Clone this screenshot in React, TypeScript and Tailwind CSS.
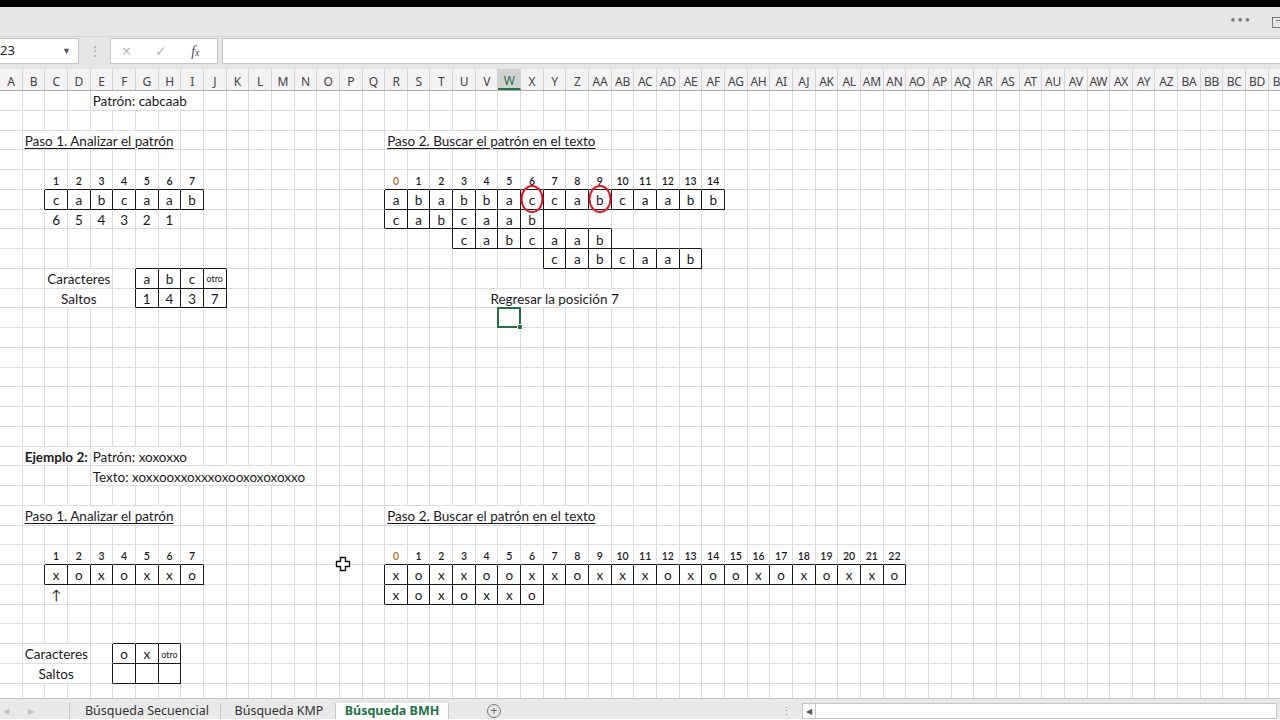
import clsx from "clsx";

const COLS = 57;
const ROWS = 31;

type Kind = "text" | "idx" | "tiny" | "title" | "bold";
type Cell = {
  t: string;
  kind?: Kind;
  align?: "left" | "center";
  box?: boolean;
  wide?: boolean;
  circle?: boolean;
  color?: string;
};

function colName(i: number) {
  let s = "";
  let n = i + 1;
  while (n > 0) {
    const m = (n - 1) % 26;
    s = String.fromCharCode(65 + m) + s;
    n = Math.floor((n - 1) / 26);
  }
  return s;
}

const cells = new Map<string, Cell>();
const key = (r: number, c: number) => `${r}-${c}`;
const put = (r: number, c: number, cell: Cell) => cells.set(key(r, c), cell);
const putRow = (r: number, c0: number, items: string[], extra: Partial<Cell> = {}) =>
  items.forEach((t, i) => put(r, c0 + i, { t, align: "center", ...extra, kind: t === "otro" ? "tiny" : extra.kind }));
const nums = (from: number, to: number) => Array.from({ length: to - from + 1 }, (_, i) => String(from + i));

// ejemplo 1
put(1, 4, { t: "Patrón: cabcaab", align: "left", wide: true });
put(3, 1, { t: "Paso 1. Analizar el patrón", kind: "title", align: "left", wide: true });
put(3, 17, { t: "Paso 2. Buscar el patrón en el texto", kind: "title", align: "left", wide: true });
putRow(5, 2, nums(1, 7), { kind: "idx" });
putRow(5, 17, nums(0, 14), { kind: "idx" });
put(5, 17, { t: "0", kind: "idx", align: "center", color: "text-[#c0641c]" });
putRow(6, 2, "cabcaab".split(""), { box: true });
putRow(6, 17, "ababbaccabcaabb".split(""), { box: true });
put(6, 23, { t: "c", align: "center", box: true, circle: true });
put(6, 26, { t: "b", align: "center", box: true, circle: true });
putRow(7, 2, "654321".split(""));
putRow(7, 17, "cabcaab".split(""), { box: true });
putRow(8, 20, "cabcaab".split(""), { box: true });
putRow(9, 24, "cabcaab".split(""), { box: true });
put(10, 3, { t: "Caracteres", align: "center", wide: true });
putRow(10, 6, ["a", "b", "c", "otro"], { box: true });
put(11, 3, { t: "Saltos", align: "center", wide: true });
putRow(11, 6, ["1", "4", "3", "7"], { box: true });
put(11, 24, { t: "Regresar la posición 7", align: "center", wide: true });

// ejemplo 2
put(19, 1, { t: "Ejemplo 2:", kind: "bold", align: "left", wide: true });
put(19, 4, { t: "Patrón: xoxoxxo", align: "left", wide: true });
put(20, 4, { t: "Texto: xoxxooxxoxxxoxooxoxoxoxxo", align: "left", wide: true });
put(22, 1, { t: "Paso 1. Analizar el patrón", kind: "title", align: "left", wide: true });
put(22, 17, { t: "Paso 2. Buscar el patrón en el texto", kind: "title", align: "left", wide: true });
putRow(24, 2, nums(1, 7), { kind: "idx" });
putRow(24, 17, nums(0, 22), { kind: "idx" });
put(24, 17, { t: "0", kind: "idx", align: "center", color: "text-[#c0641c]" });
putRow(25, 2, "xoxoxxo".split(""), { box: true });
putRow(25, 17, "xoxxooxxoxxxoxooxoxoxxo".split(""), { box: true });
put(26, 2, { t: "↑", align: "center" });
putRow(26, 17, "xoxoxxo".split(""), { box: true });
put(29, 1, { t: "Caracteres", align: "left", wide: true });
putRow(29, 5, ["o", "x", "otro"], { box: true });
put(30, 2, { t: "Saltos", align: "center", wide: true });
putRow(30, 5, ["", "", ""], { box: true });

const SEL = { r: 12, c: 22 };

function SheetCell({ r, c }: { r: number; c: number }) {
  const cell = cells.get(key(r, c));
  const boxed = (rr: number, cc: number) => !!cells.get(key(rr, cc))?.box;
  const darkR = boxed(r, c) || boxed(r, c + 1);
  const darkB = boxed(r, c) || boxed(r + 1, c);
  const selected = r === SEL.r && c === SEL.c;

  return (
    <div
      className={clsx(
        "relative flex h-full w-[22.67px] shrink-0 items-center border-r border-b",
        darkR ? "border-r-[#1a1a1a]" : "border-r-[#dadcdd]",
        darkB ? "border-b-[#1a1a1a]" : "border-b-[#dadcdd]",
        cell?.align === "left" ? "justify-start" : "justify-center"
      )}
    >
      {cell && cell.t && (
        <span
          className={clsx(
            "whitespace-nowrap",
            cell.color ?? "text-[#1b1b1b]",
            cell.wide ? "relative z-10 flex h-full items-center bg-white px-[2px] pt-[2px]" : "mt-[2px]",
            cell.kind === "idx" && "mt-[4px] text-[10.5px] font-semibold",
            cell.kind === "tiny" && "text-[9px]",
            cell.kind === "title" && "text-[13.5px] underline decoration-1 underline-offset-2",
            cell.kind === "bold" && "text-[13.5px] font-bold",
            (!cell.kind || cell.kind === "text") && "text-[13.5px]"
          )}
        >
          {cell.t}
        </span>
      )}
      {cell?.circle && (
        <span className="pointer-events-none absolute left-1/2 top-1/2 z-20 h-[28px] w-[23px] -translate-x-1/2 -translate-y-1/2 rounded-[50%] border-[2.5px] border-[#dd1a21]" />
      )}
      {selected && (
        <span className="pointer-events-none absolute -top-px -left-px -right-px -bottom-px z-20 border-2 border-[#217346]">
          <span className="absolute -right-[4px] -bottom-[4px] h-[6px] w-[6px] border border-white bg-[#217346]" />
        </span>
      )}
    </div>
  );
}

function MoveCursor() {
  return (
    <svg className="pointer-events-none absolute left-[335px] top-[556px] z-30" width="16" height="16" viewBox="0 0 16 16">
      <path
        d="M5.5 1.5h5v4h4v5h-4v4h-5v-4h-4v-5h4z"
        fill="#fff"
        stroke="#111"
        strokeWidth="1.4"
        strokeLinejoin="round"
      />
    </svg>
  );
}

export default function App() {
  const cols = Array.from({ length: COLS }, (_, i) => i);
  const rows = Array.from({ length: ROWS }, (_, i) => i + 1);

  return (
    <div className="relative h-[720px] w-[1280px] overflow-hidden bg-white font-['Lato','Liberation_Sans',sans-serif]">
      {/* window top */}
      <div className="h-[7px] bg-black" />
      <div className="flex h-[30px] items-start justify-end border-b border-[#d4d4d4] bg-[#e6e6e6] pt-[6px]">
        <span className="mr-[20px] text-[9px] tracking-[2px] text-[#777]">•••</span>
        <div className="mt-[4px] mr-[-6px] flex h-[11px] w-[14px] items-start justify-center border border-[#777]">
          <div className="mt-[2px] h-[4px] w-[6px] border-t border-[#777]" />
        </div>
      </div>

      {/* formula bar */}
      <div className="flex h-[32px] items-start bg-[#e6e6e6] pt-[1px] font-['Noto_Sans',sans-serif]">
        <div className="flex h-[26px] w-[79px] items-center justify-between border border-l-0 border-[#c6c6c6] bg-white pr-[7px]">
          <span className="text-[13px] text-[#222]">23</span>
          <span className="text-[9px] text-[#555]">▼</span>
        </div>
        <div className="flex h-[26px] w-[31px] items-center justify-center text-[12px] text-[#aaa]">⋮</div>
        <div className="flex h-[26px] w-[108px] items-center border border-[#c6c6c6] bg-white text-[#b5b5b5]">
          <span className="ml-[11px] text-[16px] leading-none">×</span>
          <span className="ml-[24px] text-[14px] leading-none">✓</span>
          <span className="ml-[24px] font-['Liberation_Serif',serif] text-[14px] italic text-[#444]">
            f<span className="text-[10px]">x</span>
          </span>
        </div>
        <div className="ml-[4px] h-[26px] flex-1 border border-r-0 border-[#c6c6c6] bg-white" />
      </div>

      {/* column headers */}
      <div className="flex h-[22px] border-b border-[#ababab] bg-[#f3f3f3] font-['Noto_Sans',sans-serif]">
        {cols.map((c) => (
          <div
            key={c}
            className={clsx(
              "flex h-full w-[22.67px] shrink-0 items-center justify-center overflow-hidden border-r border-[#d4d4d4] pt-[4px] text-[12px] tracking-[-0.3px]",
              c === SEL.c ? "border-b-2 border-b-[#217346] bg-[#d2d2d2] text-[#217346]" : "text-[#444]"
            )}
          >
            {colName(c)}
          </div>
        ))}
      </div>

      {/* sheet */}
      <div className="h-[607px] overflow-hidden">
        {rows.map((r) => (
          <div key={r} className="flex h-[19.75px]">
            {cols.map((c) => (
              <SheetCell key={c} r={r} c={c} />
            ))}
          </div>
        ))}
      </div>

      <MoveCursor />

      {/* sheet tabs */}
      <div className="flex h-[21px] items-center border-t border-[#c6c6c6] bg-[#e9e9e9] pt-[4px] font-['Noto_Sans',sans-serif] text-[12.5px] text-[#333]">
        <span className="ml-[3px] text-[8px] text-[#c4c4c4]">◀</span>
        <span className="ml-[19px] text-[8px] text-[#c4c4c4]">▶</span>
        <div className="ml-[35px] flex h-full w-[151px] items-center justify-center border-l border-[#c6c6c6] pl-[4px]">
          Búsqueda Secuencial
        </div>
        <div className="flex h-full w-[115px] items-center justify-center border-l border-[#c6c6c6] pl-[2px]">Búsqueda KMP</div>
        <div className="flex h-full w-[114px] items-center justify-center border-x border-[#c6c6c6] bg-white font-bold text-[#217346]">
          Búsqueda BMH
        </div>
        <div className="ml-[38px] flex h-[14px] w-[14px] items-center justify-center rounded-full border border-[#777] text-[12px] leading-none text-[#666]">
          +
        </div>
        <span className="ml-[280px] text-[11px] text-[#999]">⋮</span>
        <div className="ml-[10px] flex h-[16px] flex-1 items-stretch border border-[#c6c6c6] bg-white">
          <div className="flex w-[13px] items-center justify-center border-r border-[#c6c6c6] text-[8px] text-[#555]">◀</div>
        </div>
        <div className="w-[3px]" />
      </div>
    </div>
  );
}
